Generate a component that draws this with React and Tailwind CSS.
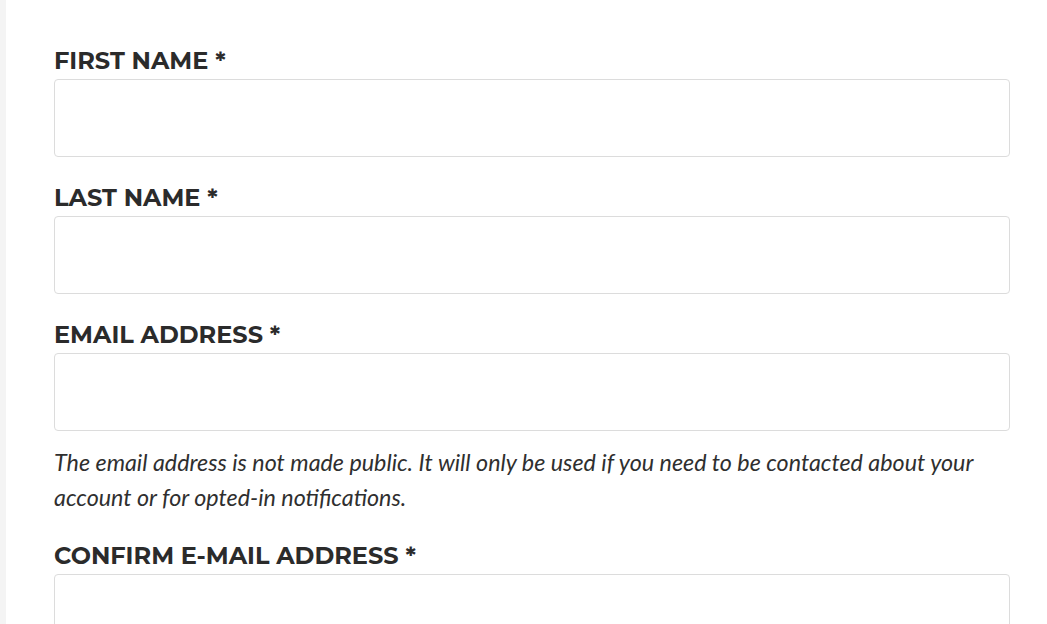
import React from 'react'

const Field = ({ label, help }) => (
  <div className="mb-[23.5px]">
    <label className="block font-['Montserrat','Inter','Liberation_Sans',sans-serif] font-bold uppercase text-[24px] leading-[36px] text-[#2b2b2b]">
      {label} <span>*</span>
    </label>
    <input
      type="text"
      className="block w-full h-[77.5px] border border-[#dcdcdc] rounded-[4px] bg-white px-3 focus:outline-none"
    />
    {help && (
      <p className="mt-[14px] font-['Lato',sans-serif] italic text-[23.3px] leading-[35px] text-[#2f2f2f]">
        {help}
      </p>
    )}
  </div>
)

export default function App() {
  return (
    <div className="h-[624px] overflow-hidden bg-white flex">
      <div className="w-[6px] bg-[#f4f4f4] shrink-0" />
      <div className="w-[956px] ml-[48px] pt-[43px]">
        <Field label="First Name" />
        <Field label="Last Name" />
        <Field
          label="Email Address"
          help="The email address is not made public. It will only be used if you need to be contacted about your account or for opted-in notifications."
        />
        <Field label="Confirm E-mail Address" />
      </div>
    </div>
  )
}
